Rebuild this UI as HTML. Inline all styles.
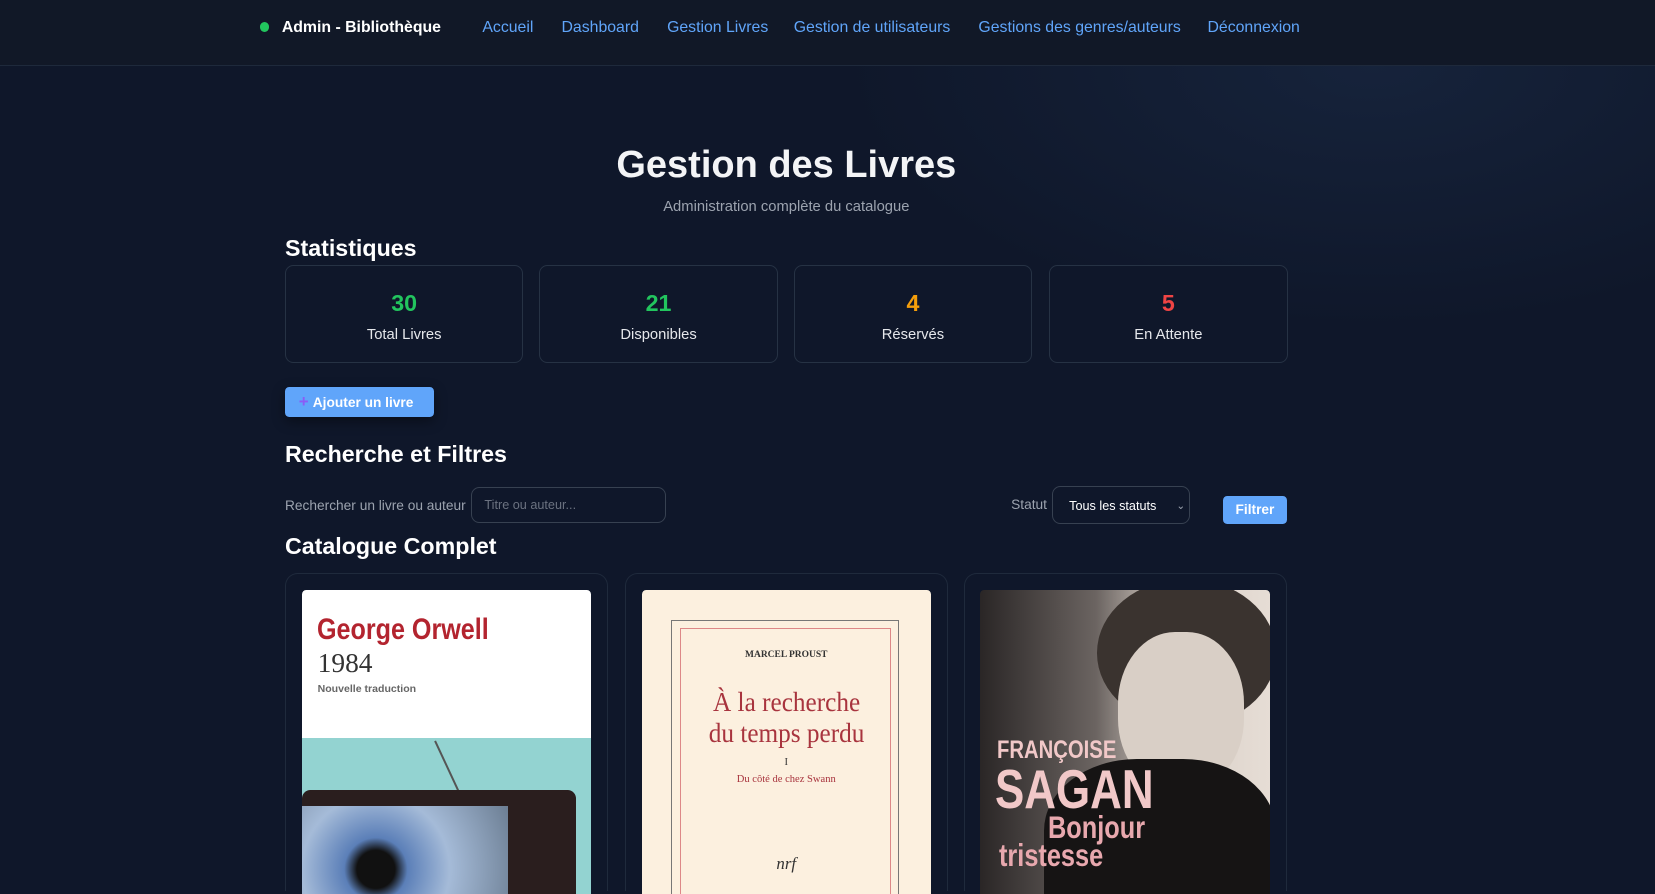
<!DOCTYPE html>
<html><head><meta charset="utf-8"><style>
html,body{margin:0;padding:0;background:#0f172a;overflow:hidden;width:1655px;height:894px}
#w{position:relative;width:1568px;height:847px;overflow:hidden;zoom:1.05548;font-family:"Liberation Sans",sans-serif;color:#e5e7eb;background:radial-gradient(ellipse 500px 250px at 1300px 60px,#16233b,transparent),#0f172a}
.a{position:absolute}
nav{position:absolute;left:0;top:0;width:1568px;height:62px;border-bottom:1px solid #1e293b;background:#111827}
nav span{position:absolute;top:18px;font-size:15px;color:#60a5fa}
.card{position:absolute;top:251px;width:224px;height:91px;border:1px solid #263244;border-radius:8px;text-align:center;background:#0f172a}
.card b{display:block;font-size:22px;margin-top:23px}
.card div{font-size:14px;margin-top:9px;color:#e5e7eb}
h2{position:absolute;margin:0;font-size:22px;color:#fff;left:270px}
.bk{position:absolute;top:543px;width:304px;height:300px;border:1px solid #1f2a3c;border-bottom:none;border-radius:12px 12px 0 0}
.cv{position:absolute;top:15px;left:15px;width:274px;height:290px;border-radius:4px 4px 0 0;overflow:hidden}
</style></head><body><div id="w">
<nav>
<div class="a" style="left:246px;top:21px;width:9px;height:9px;border-radius:50%;background:#22c55e"></div>
<span style="left:267px;color:#fff;font-weight:bold">Admin - Bibliothèque</span>
<span style="left:457px">Accueil</span>
<span style="left:532px">Dashboard</span>
<span style="left:632px">Gestion Livres</span>
<span style="left:752px">Gestion de utilisateurs</span>
<span style="left:927px">Gestions des genres/auteurs</span>
<span style="left:1144px">Déconnexion</span>
</nav>
<div class="a" style="left:0;width:1490px;top:136px;text-align:center;font-size:36px;font-weight:bold;color:#f3f4f6">Gestion des Livres</div>
<div class="a" style="left:0;width:1490px;top:189px;text-align:center;font-size:14px;color:#9ca3af">Administration complète du catalogue</div>
<h2 style="top:223px">Statistiques</h2>
<div class="card" style="left:270px"><b style="color:#22c55e">30</b><div>Total Livres</div></div>
<div class="card" style="left:511px"><b style="color:#22c55e">21</b><div>Disponibles</div></div>
<div class="card" style="left:752px"><b style="color:#f59e0b">4</b><div>Réservés</div></div>
<div class="card" style="left:994px"><b style="color:#ef4444">5</b><div>En Attente</div></div>
<div class="a" style="left:270px;top:367px;width:141px;height:28px;background:#60a5fa;border-radius:4px;font-size:13px;font-weight:bold;color:#fff;line-height:29px;box-shadow:0 4px 12px rgba(0,0,0,.4)"><span style="color:#8b5cf6;margin:0 4px 0 13px;font-size:16px">+</span>Ajouter un livre</div>
<h2 style="top:418px">Recherche et Filtres</h2>
<div class="a" style="left:270px;top:472px;font-size:13px;color:#9ca3af">Rechercher un livre ou auteur</div>
<div class="a" style="left:446px;top:461px;width:183px;height:33px;border:1px solid #374151;border-radius:8px;font-size:12px;color:#6b7280;line-height:34px;text-indent:12px">Titre ou auteur...</div>
<div class="a" style="left:958px;top:471px;font-size:13px;color:#9ca3af">Statut</div>
<div class="a" style="left:997px;top:460px;width:129px;height:35px;border:1px solid #374151;border-radius:8px;font-size:12px;color:#fff;line-height:36px;text-indent:15px">Tous les statuts<span style="position:absolute;right:4px;color:#9ca3af;font-size:10px">⌄</span></div>
<div class="a" style="left:1159px;top:470px;width:60px;height:26px;background:#60a5fa;border-radius:4px;font-size:13px;font-weight:bold;color:#fff;line-height:27px;text-align:center">Filtrer</div>
<h2 style="top:505px">Catalogue Complet</h2>
<div class="bk" style="left:270px"><div class="cv" style="background:#fff">
<div class="a" style="left:14px;top:22px;font-size:28px;font-weight:bold;color:#b3242f;transform:scaleX(.85);transform-origin:left">George Orwell</div>
<div class="a" style="left:15px;top:55px;font-size:26px;font-family:'Liberation Serif',serif;color:#333">1984</div>
<div class="a" style="left:15px;top:88px;font-size:10px;font-weight:bold;color:#666">Nouvelle traduction</div>
<div class="a" style="left:0;top:140px;width:274px;height:180px;background:#93d3d1"></div>
<div class="a" style="left:138px;top:140px;width:2px;height:58px;background:#555;transform:rotate(-25deg)"></div>
<div class="a" style="left:0;top:190px;width:260px;height:130px;background:#2a1e1e;border-radius:8px"></div>
<div class="a" style="left:0;top:205px;width:195px;height:115px;background:radial-gradient(circle at 70px 60px,#111 18px,#5b7fb8 30px,#a5bbd8 70px,#6c7e93)"></div>
</div></div>
<div class="bk" style="left:592px"><div class="cv" style="background:#fcf0df">
<div class="a" style="left:28px;top:28px;width:214px;height:300px;border:1px solid #777"></div>
<div class="a" style="left:36px;top:36px;width:198px;height:300px;border:1px solid #d88"></div>
<div class="a" style="left:0;width:274px;top:57px;text-align:center;font-family:'Liberation Serif',serif;font-size:9px;font-weight:bold;color:#333">MARCEL PROUST</div>
<div class="a" style="left:0;width:274px;top:92px;text-align:center;font-family:'Liberation Serif',serif;font-size:26px;line-height:29px;color:#a8343e;transform:scaleX(.92)">À la recherche<br>du temps perdu</div>
<div class="a" style="left:0;width:274px;top:158px;text-align:center;font-family:'Liberation Serif',serif;font-size:10px;color:#333">I</div>
<div class="a" style="left:0;width:274px;top:174px;text-align:center;font-family:'Liberation Serif',serif;font-size:10px;color:#a8343e">Du côté de chez Swann</div>
<div class="a" style="left:0;width:274px;top:250px;text-align:center;font-family:'Liberation Serif',serif;font-style:italic;font-size:16px;color:#333">nrf</div>
</div></div>
<div class="bk" style="left:913px"><div class="cv" style="background:linear-gradient(90deg,#2a2626,#6b6461 40%,#d8cfc7 65%,#e6ddd5)">
<div class="a" style="left:110px;top:-10px;width:170px;height:140px;border-radius:50%;background:#3a332f"></div>
<div class="a" style="left:130px;top:40px;width:120px;height:150px;border-radius:45%;background:#d9cfc6"></div>
<div class="a" style="left:60px;top:160px;width:220px;height:170px;border-radius:40% 40% 0 0;background:#161414"></div>
<div class="a" style="left:16px;top:138px;font-size:24px;font-weight:bold;color:#f1c8c8;transform:scaleX(.8);transform-origin:left">FRANÇOISE</div>
<div class="a" style="left:14px;top:158px;font-size:52px;font-weight:bold;color:#f1c8c8;transform:scaleX(.8);transform-origin:left">SAGAN</div>
<div class="a" style="left:64px;top:208px;font-size:30px;font-weight:bold;color:#e8a8ae;transform:scaleX(.8);transform-origin:left">Bonjour</div>
<div class="a" style="left:18px;top:234px;font-size:30px;font-weight:bold;color:#e8a8ae;transform:scaleX(.8);transform-origin:left">tristesse</div>
</div></div>
</div></body></html>
